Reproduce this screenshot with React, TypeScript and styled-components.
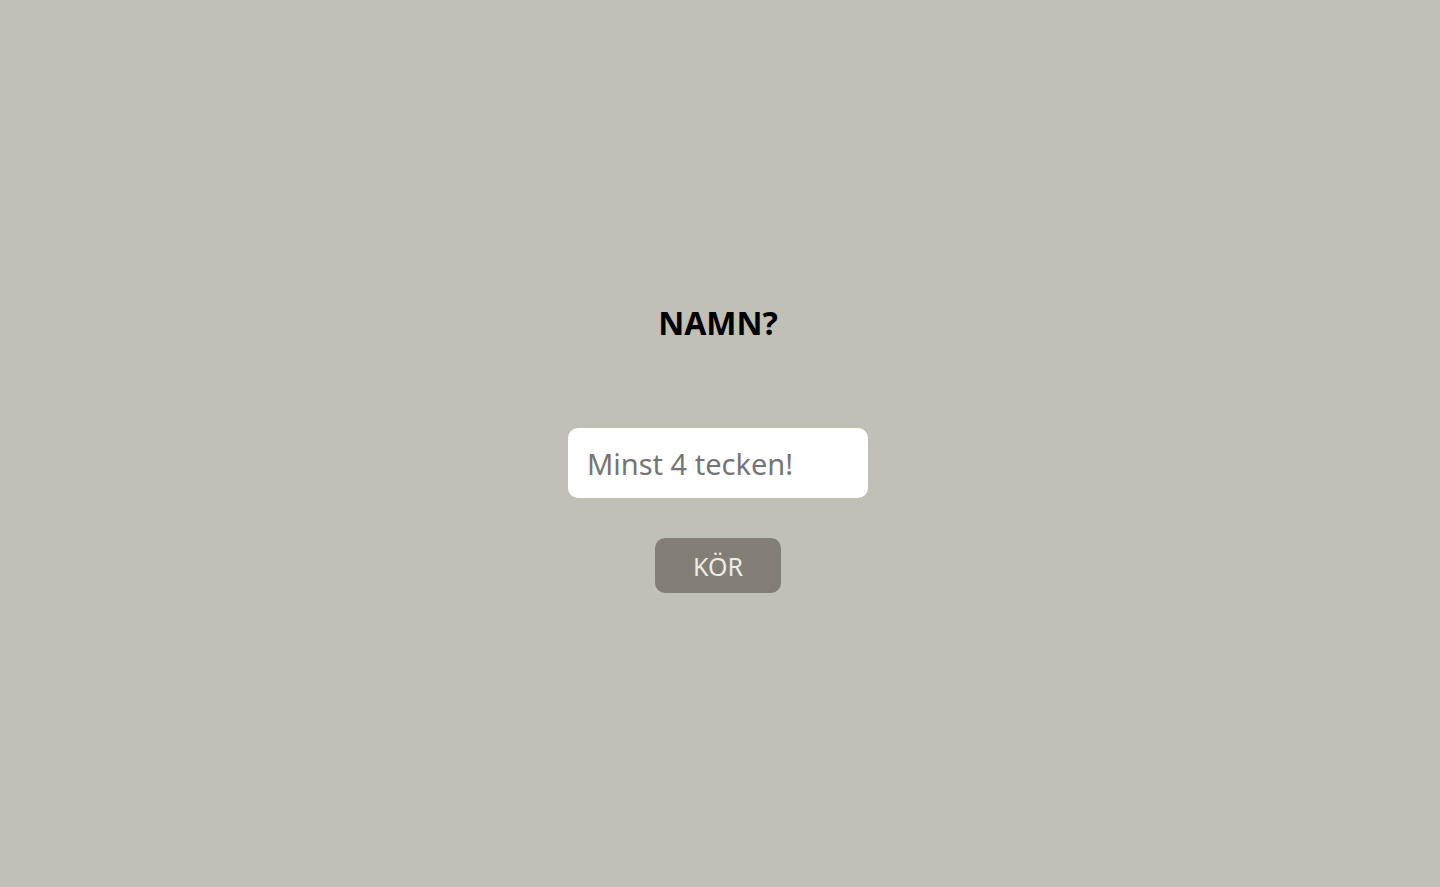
import React from "react";
import styled, { createGlobalStyle } from "styled-components";

const Global = createGlobalStyle`
  html, body { margin: 0; padding: 0; }
  body { background: #c0c0b6; font-family: "Noto Sans", "Open Sans", sans-serif; }
`;

const Page = styled.main`
  min-height: 887px;
  box-sizing: border-box;
  padding: 296px 4px 0 0;
  display: flex;
  flex-direction: column;
  align-items: center;
`;

const Title = styled.h1`
  margin: 0;
  font-size: 32px;
  line-height: 54px;
  font-weight: 700;
  color: #000;
  letter-spacing: 0;
`;

const Input = styled.input`
  margin-top: 78px;
  width: 300px;
  height: 70px;
  box-sizing: border-box;
  border: none;
  border-radius: 10px;
  background: #fff;
  padding: 0 19px;
  font-family: inherit;
  font-size: 29px;
  color: #333;
  outline: none;
  &::placeholder { color: #757575; }
`;

const Button = styled.button`
  margin-top: 40px;
  width: 126px;
  height: 55px;
  border: none;
  border-radius: 10px;
  background: #827e76;
  color: #ecebe6;
  font-family: inherit;
  font-size: 25px;
  cursor: pointer;
`;

export default function App() {
  return (
    <>
      <Global />
      <Page>
        <Title>NAMN?</Title>
        <Input placeholder="Minst 4 tecken!" />
        <Button>KÖR</Button>
      </Page>
    </>
  );
}
